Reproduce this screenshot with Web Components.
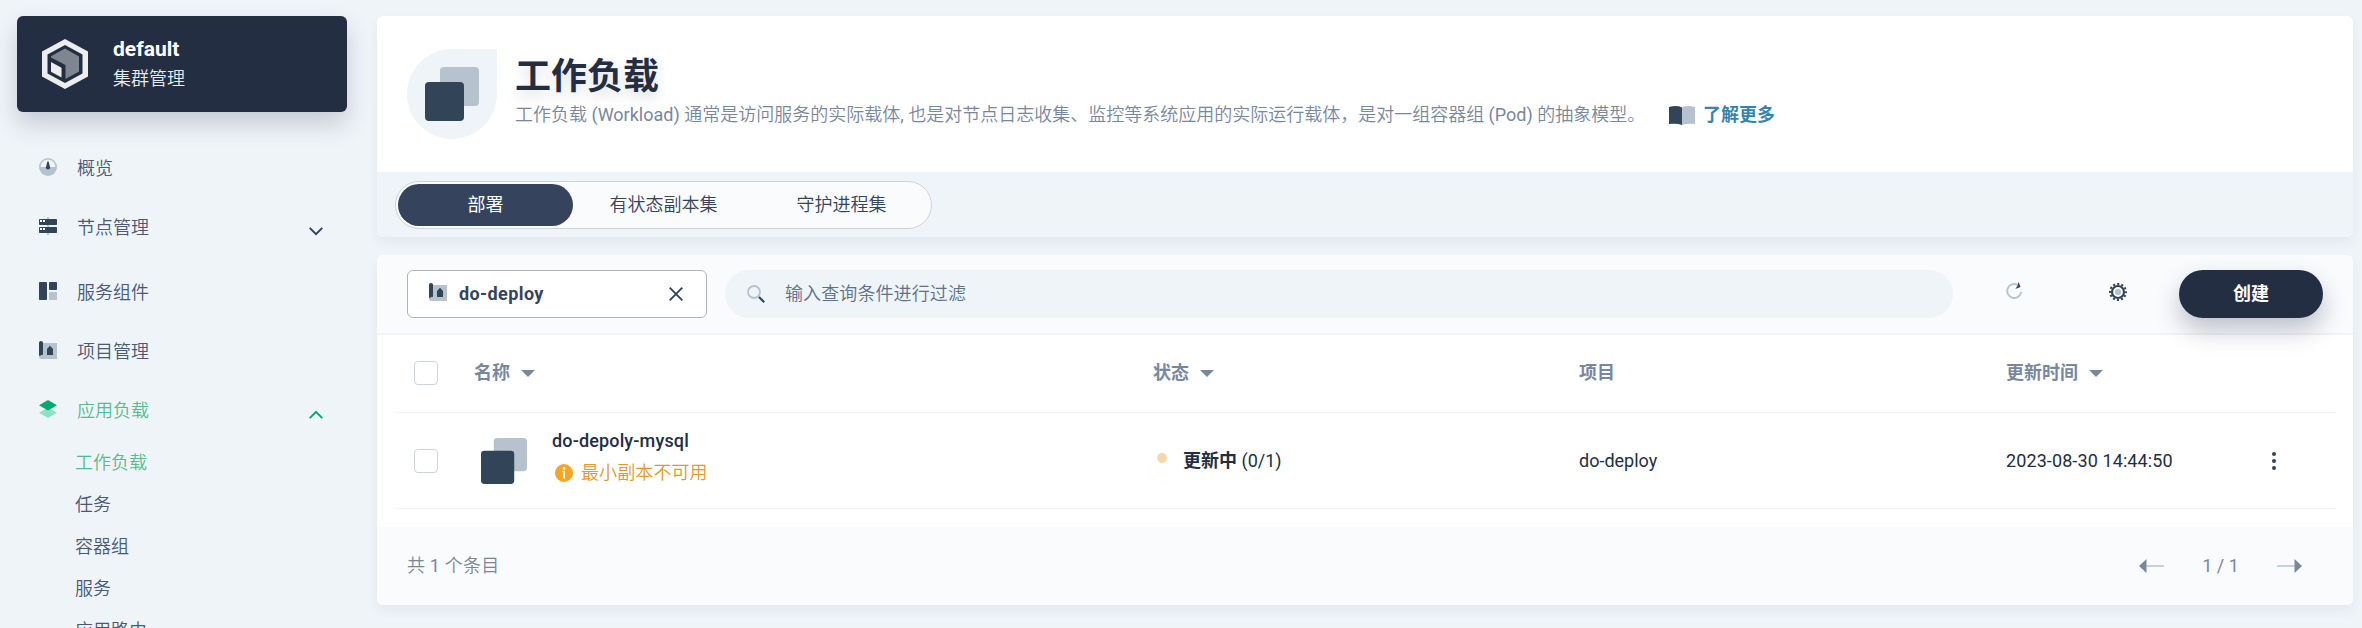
<!DOCTYPE html>
<html lang="zh-CN">
<head>
<meta charset="utf-8">
<title>工作负载</title>
<style>
html,body{margin:0;height:628px;overflow:hidden;background:#eff4f9}
body{font:400 18px/30px Roboto,"Noto Sans CJK SC",sans-serif;color:#242e42}
</style>
</head>
<body>
<ks-app></ks-app>
<script>
const ICONS = {
  logo: ['0 0 46 50', '<path fill="#ededed" fill-rule="evenodd" d="M23 0L46 12.5V37.5L23 50L0 37.5V12.5ZM23 6L5.500 15.500V34.500L23 44L40.500 34.500V15.500Z"/><path fill="#7f8691" d="M9 17.300L23 9.500L37 17.500V32.500L23.500 40V26L9 18.500Z"/><path fill="#ededed" d="M9 23L19.500 28.700V38.600L9 32.700Z"/>'],
  gauge: ['0 0 18 18', '<circle cx="9" cy="9" r="9" fill="#b6c2cd"/><path fill="#eff4f9" d="M1.600 9a7.400 7.400 0 0 1 14.800 0Z"/><path fill="#324558" d="M8.400 3.500h1.200L11.100 9.500a2.100 2.100 0 1 1-4.200 0Z"/>'],
  nodes: ['0 0 18 18', '<path fill="#b6c2cd" d="M8 0h2v18H8z"/><rect y="2" width="18" height="6" rx=".8" fill="#324558"/><rect y="10" width="18" height="6" rx=".8" fill="#324558"/><path fill="#fff" d="M1 3h2v2h-2zM4 3h2v2H4zM1 11h2v2h-2zM4 11h2v2H4z"/>'],
  components: ['0 0 18 18', '<rect width="8" height="18" rx=".8" fill="#324558"/><rect x="10" width="8" height="8" rx=".8" fill="#324558"/><rect x="10" y="10" width="8" height="8" rx=".8" fill="#b6c2cd"/>'],
  project: ['0 0 18 18', '<path fill="#b6c2cd" d="M0 14h2l2-1V2h14v16H2a2 2 0 0 1-2-2z"/><path fill="#324558" d="M0 1.500Q0 0 2 0T4 1.500V14q-1.500-.6-2.500.8H0ZM11 4.800L14 8v6H8V8Z"/>'],
  layers: ['0 0 18 18', '<path fill="#90e0c5" d="M9 7.500L18 12.800L9 18L0 12.800Z"/><path fill="#00aa72" d="M9 0L18 5.200L9 10.400L0 5.200Z"/>'],
  workload: ['0 0 54 54', '<rect x="15" width="39" height="39" rx="4" fill="#b6c2cd"/><rect y="15" width="39" height="39" rx="4" fill="#324558"/>'],
  book: ['0 0 26 19', '<path fill="#324558" d="M0 1Q8-1 13 1.500V19Q8 17 0 18Z"/><path fill="#b6c2cd" d="M13 1.500Q18-1 26 1V18Q18 17 13 19Z"/>'],
  down: ['0 0 14 9', '<path d="M.7.900L7 7.200L13.300.900" fill="none" stroke="#324558" stroke-width="2"/>'],
  up: ['0 0 14 9', '<path d="M.7 8.100L7 1.800L13.300 8.100" fill="none" stroke="#00aa72" stroke-width="2"/>'],
  close: ['0 0 14 14', '<path d="M.7.700L13.300 13.300M13.300.700L.7 13.300" stroke="#324558" stroke-width="1.900"/>'],
  search: ['0 0 18 18', '<circle cx="7" cy="7" r="6" fill="none" stroke="#b6c2cd" stroke-width="1.800"/><path d="M12 12l5.200 5.200" stroke="#324558" stroke-width="2.200"/>'],
  refresh: ['0 0 18 18', '<path d="M11.500 2.800A7 7 0 1 0 15.200 9.800" fill="none" stroke="#b6c2cd" stroke-width="1.900"/><path fill="#324558" d="M12.500 0L14.600 5L9.300 7Q11.800 4.500 12.500 0Z"/>'],
  gear: ['0 0 18 18', '<circle cx="9" cy="9" r="8" fill="none" stroke="#324558" stroke-width="2" stroke-dasharray="2.090 2.099" stroke-dashoffset="1.050"/><circle cx="9" cy="9" r="6" fill="none" stroke="#324558" stroke-width="2.200"/><circle cx="9" cy="9" r="3.100" fill="#b6c2cd"/>'],
  caret: ['0 0 14 7', '<path fill="#79879c" d="M0 0H14L7 7Z"/>'],
  info: ['0 0 18 18', '<circle cx="9" cy="9" r="9" fill="#f5a623"/><circle cx="9" cy="4.400" r="1.300" fill="#fff"/><path fill="#fff" d="M7.200 6.800H10V14.500H8.200V8H7.200Z"/>'],
  more: ['0 0 4 18', '<circle cx="2" cy="2" r="2"/><circle cx="2" cy="9" r="2"/><circle cx="2" cy="16" r="2"/>'],
  prev: ['0 0 25 14', '<path fill="#c9d0d8" d="M7 6h18v2H7z"/><path fill="#79879c" d="M7.500 0V14L0 7Z"/>'],
  next: ['0 0 25 14', '<path fill="#c9d0d8" d="M0 6h18v2H0z"/><path fill="#79879c" d="M17.500 0V14L25 7Z"/>']
};
function define(name, html) {
  const t = document.createElement('template');
  t.innerHTML = html;
  customElements.define(name, class extends HTMLElement {
    constructor() {
      super();
      this.attachShadow({mode: 'open'}).append(t.content.cloneNode(true));
    }
  });
}
customElements.define('ks-icon', class extends HTMLElement {
  connectedCallback() {
    if (this.shadowRoot) return;
    const [box, body] = ICONS[this.getAttribute('name')];
    const [, , w, h] = box.split(' ');
    const W = this.getAttribute('w') || w, H = this.getAttribute('h') || h;
    this.attachShadow({mode: 'open'}).innerHTML =
      `<style>:host{display:block;flex:none;width:${W}px;height:${H}px}svg{display:block;fill:#324558}</style>
       <svg width="${W}" height="${H}" viewBox="${box}">${body}</svg>`;
  }
});

define('ks-cluster-card', `<style>
:host{display:flex;box-sizing:border-box;height:96px;padding:23px 25px;gap:25px;border-radius:6px;background:#242e42;color:#fff;box-shadow:0 12px 24px rgba(36,46,66,.2)}
.t{padding-top:1px}b{display:block;font-size:21px;line-height:18px;margin-top:-.5px}.s{color:#e6eaef;line-height:28px;margin-top:7px;font-weight:350}
</style><ks-icon name="logo"></ks-icon><div class="t"><b><slot name="title"></slot></b><div class="s"><slot></slot></div></div>`);

define('ks-nav-item', `<style>
:host{display:flex;align-items:center;height:30px;padding:0 24px 0 22px;color:#4a5974;gap:20px;font-weight:350}
:host([active]){color:#55bc8a}
span{flex:1}slot[name]::slotted(*){position:relative;top:-2px}
slot[name=arrow]::slotted(*){top:3px}
</style><slot name="icon"></slot><span><slot></slot></span><slot name="arrow"></slot>`);
define('ks-sub-item', `<style>:host{display:block;height:42px;line-height:42px;padding-left:58px;color:#4a5974;font-weight:350}:host([active]){color:#55bc8a}</style><slot></slot>`);

define('ks-sidebar', `<style>
:host{display:block;width:330px;flex:none}
nav{display:flex;flex-direction:column;padding-top:42px}
.a{margin-bottom:29px}.b{margin-bottom:35px}.d{margin-bottom:16px}
</style>
<ks-cluster-card><span slot="title">default</span>集群管理</ks-cluster-card>
<nav>
<ks-nav-item class="a"><ks-icon slot="icon" name="gauge"></ks-icon>概览</ks-nav-item>
<ks-nav-item class="b"><ks-icon slot="icon" name="nodes"></ks-icon>节点管理<ks-icon slot="arrow" name="down"></ks-icon></ks-nav-item>
<ks-nav-item class="a"><ks-icon slot="icon" name="components"></ks-icon>服务组件</ks-nav-item>
<ks-nav-item class="a"><ks-icon slot="icon" name="project"></ks-icon>项目管理</ks-nav-item>
<ks-nav-item active class="d"><ks-icon slot="icon" name="layers"></ks-icon>应用负载<ks-icon slot="arrow" name="up"></ks-icon></ks-nav-item>
<ks-sub-item active>工作负载</ks-sub-item><ks-sub-item>任务</ks-sub-item><ks-sub-item>容器组</ks-sub-item><ks-sub-item>服务</ks-sub-item><ks-sub-item>应用路由</ks-sub-item>
</nav>`);

define('ks-tab', `<style>:host{display:block;width:175px;height:42px;line-height:42px;border-radius:21px;text-align:center;color:#36435c;font-weight:350}:host([active]){background:#36435c;color:#fff;font-weight:400}</style><slot></slot>`);

define('ks-banner', `<style>
:host{display:block;height:221px;border-radius:6px;overflow:hidden;background:#fff;box-shadow:0 6px 12px rgba(36,46,66,.06)}
.top{display:flex;box-sizing:border-box;height:156px;padding:33px 30px 0;gap:18px}
.leaf{display:flex;width:90px;height:90px;flex:none;align-items:center;justify-content:center;border-radius:45px 0 45px 45px;background:#eff4f9}
h1{margin:6px 0 0;font-size:36px;line-height:44px;font-weight:700;text-shadow:0 6px 12px rgba(36,46,66,.15)}
.d{display:flex;align-items:center;height:30px;margin-top:1px;color:#79879c;white-space:nowrap}
.p{width:1154px;font-weight:350}
.p span{font-weight:400}
a{font-weight:700;color:#3385b0;margin-left:8px}
.bar{display:flex;height:65px;align-items:center;padding-left:18px;background:#eff4f9}
.tabs{display:flex;gap:3px;padding:2px;border:1px solid #ccd3db;border-radius:24px;background:#f9fbfd;height:42px}
</style>
<div class="top"><div class="leaf"><ks-icon name="workload"></ks-icon></div>
<div><h1>工作负载</h1><div class="d"><span class="p">工作负载<span> (Workload) </span>通常是访问服务的实际载体<span>, </span>也是对节点日志收集、监控等系统应用的实际运行载体，是对一组容器组<span> (Pod) </span>的抽象模型。</span><ks-icon name="book"></ks-icon><a>了解更多</a></div></div></div>
<div class="bar"><div class="tabs"><ks-tab active>部署</ks-tab><ks-tab>有状态副本集</ks-tab><ks-tab>守护进程集</ks-tab></div></div>`);

define('ks-toolbar', `<style>
:host{display:flex;box-sizing:border-box;height:80px;padding:15px 30px 0;background:#f9fbfd;border-bottom:2px solid #eff2f6}
.sel{display:flex;box-sizing:border-box;width:300px;height:48px;align-items:center;padding:0 23px 0 21px;border:1px solid #abb4be;border-radius:6px;background:#fff;font-weight:700;color:#36435c}
.sel span{flex:1;margin-left:12px;letter-spacing:.4px}
.sel ks-icon:first-child{position:relative;top:-2px}
.search{display:flex;box-sizing:border-box;width:1228px;height:48px;align-items:center;margin-left:18px;padding-left:22px;gap:20px;border-radius:24px;background:#eff4f9;color:#5f708a;font-weight:350;letter-spacing:.1px}
.r{margin:12px 0 0 53px}.g{margin:13px 0 0 85px}
button{all:unset;width:144px;height:48px;margin-left:52px;border-radius:24px;background:#242e42;color:#fff;font-weight:700;text-align:center;line-height:48px;box-shadow:0 12px 24px rgba(36,46,66,.28)}
</style>
<div class="sel"><ks-icon name="project"></ks-icon><span>do-deploy</span><ks-icon name="close"></ks-icon></div>
<div class="search"><ks-icon name="search"></ks-icon><span>输入查询条件进行过滤</span></div>
<ks-icon class="r" name="refresh"></ks-icon><ks-icon class="g" name="gear"></ks-icon><button>创建</button>`);

define('ks-row', `<style>
:host{display:grid;grid-template-columns:19px 60px 679px 426px 427px 266px 1fr;box-sizing:border-box;height:96px;align-items:center;margin:0 18px;border-bottom:1px solid #eff4f9}
:host([head]){height:78px;padding-bottom:1px;font-weight:700;color:#79879c}
i{grid-column:2;width:22px;height:22px;border:1px solid #ccd3db;border-radius:4px;background:#fff}
::slotted(*){display:flex;align-items:center}
</style><i></i><slot></slot>`);

define('ks-name', `<style>
:host{display:flex;padding-left:7px;gap:25px}
.n{margin-top:-6px}
b{display:block;font-weight:500;line-height:26px;letter-spacing:.15px}
.w{display:flex;align-items:center;gap:8px;margin:4px 0 0 3px;color:#e0992c;font-weight:350;letter-spacing:.1px}
ks-icon{align-self:center}
</style><ks-icon name="workload" w="46" h="46"></ks-icon><div class="n"><b>do-depoly-mysql</b><div class="w"><ks-icon name="info"></ks-icon>最小副本不可用</div></div>`);

define('ks-status', `<style>
:host{display:flex;align-items:center}
i{width:10px;height:10px;margin:-6px 16px 0 4px;border-radius:50%;background:#f5d8ab;box-shadow:0 12px 18px rgba(245,166,35,.07)}
b{font-weight:700}
</style><i></i><span><b>更新中</b> (0/1)</span>`);

define('ks-footer', `<style>
:host{display:flex;height:77px;padding-bottom:1px;align-items:center;padding-right:51px;padding-left:30px;background:#f9fbfd;color:#79879c}
.t{flex:1;font-weight:350;letter-spacing:.2px}.t span{font-weight:400}.n{width:113px;text-align:center}
</style><span class="t">共<span> 1 </span>个条目</span><ks-icon name="prev"></ks-icon><span class="n">1 / 1</span><ks-icon name="next"></ks-icon>`);

define('ks-table', `<style>
:host{display:block;height:350px;border-radius:6px;overflow:hidden;background:#fff;box-shadow:0 6px 12px rgba(36,46,66,.06)}
ks-toolbar{position:relative}
.h ks-icon{margin-left:11px}
.time{letter-spacing:.1px}
ks-footer{margin-top:18px}
</style>
<ks-toolbar></ks-toolbar>
<ks-row head class="h"><span>名称<ks-icon name="caret"></ks-icon></span><span>状态<ks-icon name="caret"></ks-icon></span><span>项目</span><span>更新时间<ks-icon name="caret"></ks-icon></span></ks-row>
<ks-row><ks-name></ks-name><ks-status></ks-status><span>do-deploy</span><span class="time">2023-08-30 14:44:50</span><ks-icon name="more"></ks-icon></ks-row>
<ks-footer></ks-footer>`);

define('ks-app', `<style>
:host{display:flex;height:612px;padding:16px 9px 0 17px;gap:30px}
main{flex:1;display:flex;flex-direction:column;gap:18px}
</style><ks-sidebar></ks-sidebar><main><ks-banner></ks-banner><ks-table></ks-table></main>`);
</script>
</body>
</html>
